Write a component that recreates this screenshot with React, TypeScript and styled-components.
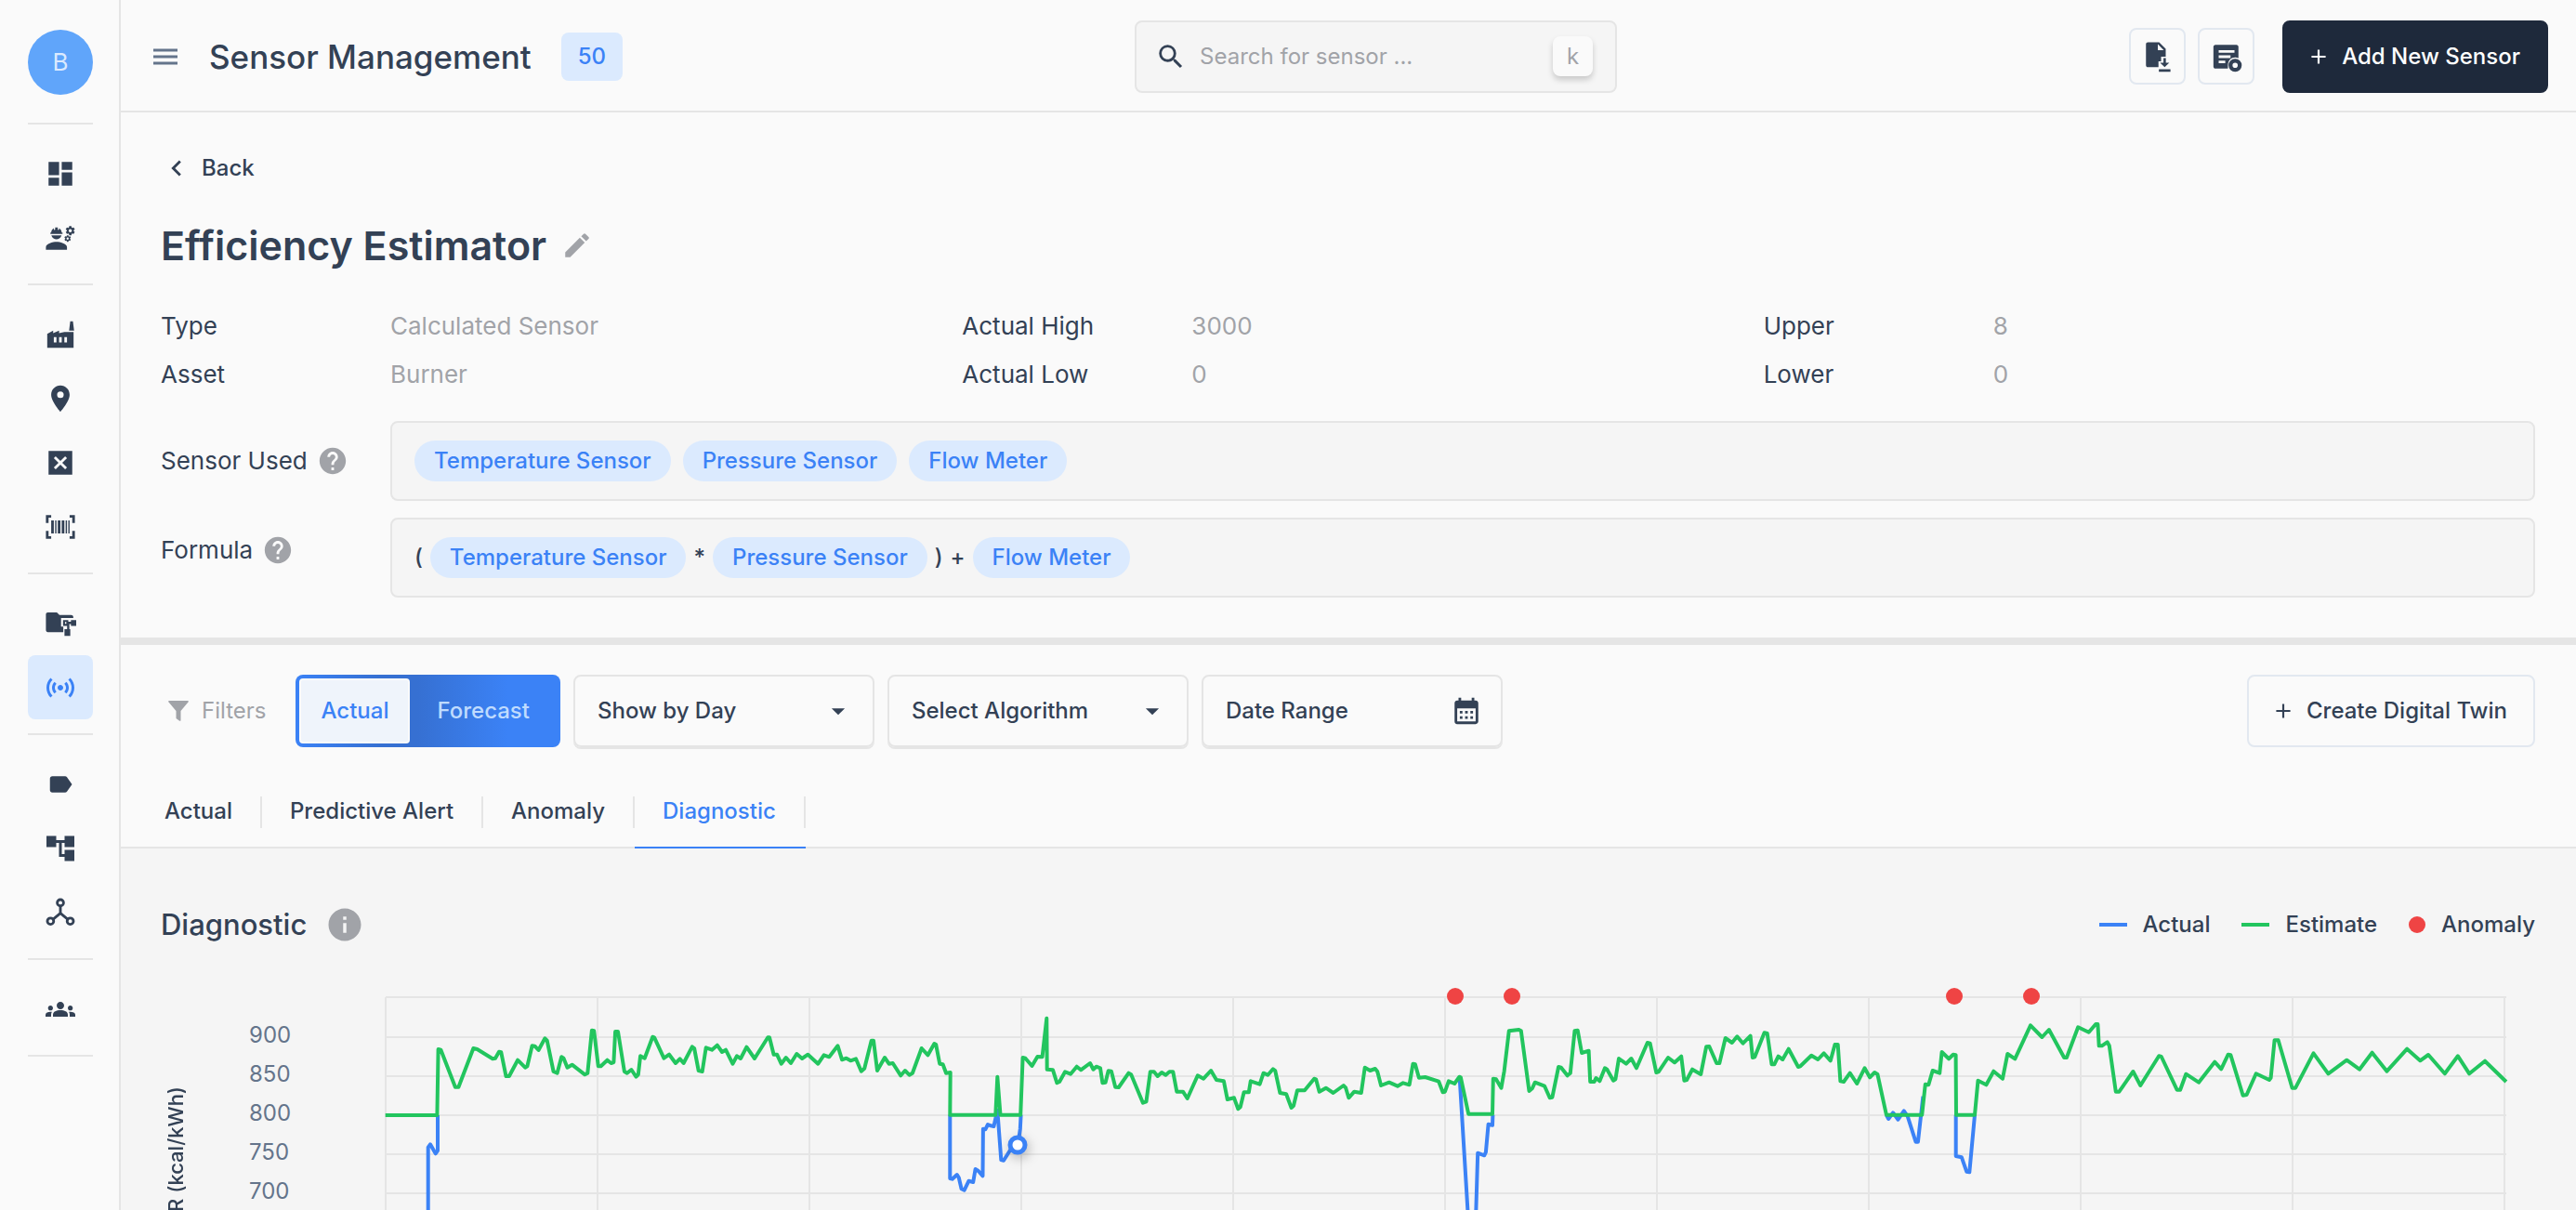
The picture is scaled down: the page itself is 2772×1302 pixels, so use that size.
import React from "react";
import styled, { createGlobalStyle } from "styled-components";
import {
  MdAccountTree,
  MdAdd,
  MdArrowDropDown,
  MdCalendarMonth,
  MdChevronLeft,
  MdDashboard,
  MdDisabledByDefault,
  MdEdit,
  MdEngineering,
  MdGroups,
  MdHelp,
  MdInfo,
  MdLabel,
  MdLocationOn,
  MdSearch,
  MdSensors,
} from "react-icons/md";

const color = {
  page: "#fafafa",
  panel: "#f5f5f5",
  line: "#e5e5e5",
  edge: "#e2e8f0",
  ink: "#334155",
  dark: "#1e293b",
  muted: "#a1a3a8",
  blue: "#3b82f6",
  blueDeep: "#3670d2",
  blueSoft: "#dbeafe",
  green: "#22c55e",
  red: "#ef4444",
};

const GlobalStyle = createGlobalStyle`
  *, *::before, *::after { box-sizing: border-box; }
  body {
    margin: 0;
    background: ${color.page};
    color: ${color.ink};
    font-family: Inter, "Liberation Sans", sans-serif;
    font-size: 24px;
    line-height: 32px;
  }
  button, input, select { font: inherit; color: inherit; margin: 0; }
  button { cursor: pointer; }
  h1, h2, p, dl, dd, ul { margin: 0; padding: 0; }
  svg { display: block; flex: none; }
`;

const Shell = styled.div`
  display: flex;
  height: 100vh;
  overflow: hidden;
`;

/* ---------- sidebar ---------- */

const Sidebar = styled.nav`
  flex: none;
  width: 130px;
  padding: 32px 28px 0 30px;
  border-right: 2px solid ${color.line};
`;

const Avatar = styled.div`
  display: flex;
  align-items: center;
  justify-content: center;
  width: 70px;
  height: 70px;
  margin-bottom: 30px;
  border-radius: 50%;
  background: #60a5fa;
  color: ${color.blueSoft};
  font-size: 26px;
`;

const NavGroup = styled.ul`
  list-style: none;
  padding: 18px 0 15px;
  border-top: 2px solid ${color.line};
  &:last-child {
    border-bottom: 2px solid ${color.line};
  }
`;

const NavLink = styled.a<{ $active?: boolean }>`
  display: flex;
  align-items: center;
  justify-content: center;
  height: 69px;
  border-radius: 8px;
  color: ${(p) => (p.$active ? color.blue : color.ink)};
  background: ${(p) => (p.$active ? color.blueSoft : "transparent")};
`;

/* ---------- top bar ---------- */

const Main = styled.main`
  flex: 1;
  min-width: 0;
`;

const TopBar = styled.header`
  display: flex;
  align-items: center;
  justify-content: space-between;
  height: 121px;
  padding: 2px 30px 0 35px;
  border-bottom: 2px solid ${color.line};
`;

const Cluster = styled.div<{ $gap: number }>`
  display: flex;
  align-items: center;
  gap: ${(p) => p.$gap}px;
`;

const PlainButton = styled.button`
  display: flex;
  align-items: center;
  padding: 0;
  border: 0;
  background: none;
`;

const PageName = styled.p`
  padding-left: 2px;
  font-size: 35px;
  line-height: 44px;
  font-weight: 500;
`;

const Count = styled.span`
  padding: 10px 18px;
  border-radius: 8px;
  background: ${color.blueSoft};
  color: ${color.blue};
  font-weight: 500;
`;

const SearchBox = styled.label`
  display: flex;
  align-items: center;
  width: 519px;
  height: 78px;
  padding: 0 24px 0 20px;
  border: 2px solid ${color.line};
  border-radius: 8px;
  background: ${color.panel};
`;

const SearchInput = styled.input`
  flex: 1;
  min-width: 0;
  padding: 0 14px;
  border: 0;
  outline: 0;
  background: none;
  &::placeholder {
    color: ${color.muted};
    opacity: 1;
  }
`;

const KeyCap = styled.kbd`
  display: flex;
  align-items: center;
  justify-content: center;
  width: 43px;
  height: 43px;
  border-radius: 8px;
  background: ${color.page};
  box-shadow: 0 4px 6px rgba(0, 0, 0, 0.18);
  color: ${color.muted};
  font-family: inherit;
`;

const IconButton = styled.button`
  display: flex;
  align-items: center;
  justify-content: center;
  width: 61px;
  height: 61px;
  padding: 0;
  border: 2px solid ${color.edge};
  border-radius: 8px;
  background: none;
`;

const ActionButton = styled.button<{ $solid?: boolean }>`
  display: flex;
  align-items: center;
  gap: 12px;
  height: 78px;
  padding: 0 28px 0 24px;
  border: 2px solid ${(p) => (p.$solid ? color.dark : color.edge)};
  border-radius: 8px;
  background: ${(p) => (p.$solid ? color.dark : "transparent")};
  color: ${(p) => (p.$solid ? "#ffffff" : color.ink)};
  font-weight: 500;
`;

/* ---------- sensor details ---------- */

const Details = styled.section`
  padding: 43px 44px 43px 43px;
  border-bottom: 8px solid ${color.line};
`;

const BackLink = styled.a`
  display: inline-flex;
  align-items: center;
  gap: 10px;
  color: inherit;
  font-weight: 500;
  text-decoration: none;
`;

const TitleRow = styled.div`
  display: flex;
  align-items: center;
  gap: 16px;
  margin: 32px 0 45px;
`;

const Title = styled.h1`
  font-size: 43px;
  line-height: 52px;
  font-weight: 600;
`;

const Facts = styled.dl`
  display: grid;
  grid-template-columns: repeat(3, 1fr);
  gap: 20px 32px;
  margin-bottom: 34px;
  font-size: 26px;
`;

const Fact = styled.div`
  display: grid;
  grid-template-columns: 247px 1fr;
`;

const FactValue = styled.dd`
  color: ${color.muted};
`;

const FieldRow = styled.div<{ $top?: boolean }>`
  display: grid;
  grid-template-columns: 247px 1fr;
  align-items: ${(p) => (p.$top ? "start" : "center")};
  & + & {
    margin-top: 18px;
  }
`;

const FieldName = styled.div<{ $top?: boolean }>`
  display: flex;
  align-items: center;
  gap: 10px;
  padding-top: ${(p) => (p.$top ? 18 : 0)}px;
  font-size: 26px;
`;

const FieldBox = styled.div<{ $gap: number }>`
  display: flex;
  align-items: center;
  gap: ${(p) => p.$gap}px;
  min-height: 86px;
  padding: 0 24px;
  border: 2px solid ${color.line};
  border-radius: 8px;
  background: ${color.panel};
  font-weight: 500;
`;

const Chip = styled.span`
  padding: 6px 21px;
  border-radius: 22px;
  background: ${color.blueSoft};
  color: ${color.blue};
`;

/* ---------- filters and tabs ---------- */

const FilterBar = styled.div`
  display: flex;
  align-items: center;
  justify-content: space-between;
  padding: 32px 44px 0 51px;
`;

const FilterLabel = styled.span`
  display: flex;
  align-items: center;
  gap: 14px;
  margin-right: 18px;
  color: ${color.muted};
`;

const Toggle = styled.div`
  display: flex;
  height: 78px;
  padding: 4px;
  border-radius: 8px;
  background: linear-gradient(90deg, ${color.blue} 0%, ${color.blueDeep} 32%, ${color.blueDeep} 46%, ${color.blue} 80%);
`;

const ToggleOption = styled.button<{ $on?: boolean }>`
  padding: 0 ${(p) => (p.$on ? 21 : 29)}px;
  border: ${(p) => (p.$on ? `2px solid ${color.page}` : "0")};
  border-radius: 4px;
  background: ${(p) => (p.$on ? "#eff4fb" : "transparent")};
  color: ${(p) => (p.$on ? color.blue : "#bfdbfe")};
  font-weight: 500;
`;

const Picker = styled.div`
  display: grid;
  align-items: center;
  width: 324px;
  height: 78px;
  border: 2px solid ${color.line};
  border-radius: 8px;
  box-shadow: 0 2px 0 ${color.line};
  font-weight: 500;
  & > * {
    grid-area: 1 / 1;
  }
  & > svg {
    justify-self: end;
    margin-right: 20px;
    pointer-events: none;
  }
`;

const PickerSelect = styled.select`
  width: 100%;
  height: 74px;
  padding: 0 24px;
  border: 0;
  appearance: none;
  background: none;
`;

const PickerButton = styled.button`
  width: 100%;
  height: 74px;
  padding: 0 24px;
  border: 0;
  background: none;
  text-align: left;
`;

const Tabs = styled.div`
  display: flex;
  margin-top: 35px;
  padding-left: 17px;
  border-bottom: 2px solid ${color.line};
`;

const Tab = styled.button<{ $on?: boolean }>`
  height: 74px;
  margin-bottom: -2px;
  padding: 0;
  border: 0;
  border-bottom: 2px solid ${(p) => (p.$on ? color.blue : "transparent")};
  background: none;
  color: ${(p) => (p.$on ? color.blue : color.ink)};
  font-weight: 500;
`;

const TabText = styled.span`
  display: block;
  height: 34px;
  margin-bottom: 2px;
  padding: 0 30px;
  border-right: 2px solid ${color.line};
`;

/* ---------- chart ---------- */

const ChartPanel = styled.section`
  padding: 61px 44px 0 43px;
  background: ${color.panel};
`;

const ChartHead = styled.div`
  display: flex;
  align-items: center;
  justify-content: space-between;
  height: 42px;
`;

const ChartTitle = styled.h2`
  font-size: 31px;
  line-height: 40px;
  font-weight: 500;
`;

const LegendItem = styled.span`
  display: flex;
  align-items: center;
  gap: 17px;
  font-weight: 500;
`;

const LegendLine = styled.span<{ $color: string }>`
  width: 30px;
  height: 4px;
  background: ${(p) => p.$color};
`;

const LegendDot = styled.span`
  width: 18px;
  height: 18px;
  border-radius: 50%;
  background: ${color.red};
`;

const ChartBody = styled.div`
  display: flex;
  align-items: flex-start;
  margin-top: 57px;
  padding-right: 31px;
`;

const AxisTitle = styled.span`
  width: 32px;
  margin-top: 96px;
  writing-mode: vertical-rl;
  transform: rotate(180deg);
  font-size: 22px;
  font-weight: 500;
  white-space: nowrap;
`;

const AxisLabels = styled.div`
  width: 210px;
  padding: 20px 0 0 63px;
  color: #64748b;
`;

const AxisLabel = styled.div`
  height: 42px;
  line-height: 42px;
`;

const Plot = styled.svg`
  flex: 1;
  min-width: 0;
  height: 300px;
  overflow: visible;
`;

const Marker = styled.circle`
  fill: #ffffff;
  stroke: ${color.blue};
  stroke-width: 5px;
  filter: drop-shadow(2px 4px 6px rgba(0, 0, 0, 0.25));
`;

/* Hand-drawn icons */

const MenuIcon = () => (
  <svg width="26" height="26" viewBox="0 0 26 26" stroke="#64748b" strokeWidth="3" aria-hidden="true">
    <path d="M0 6h26M0 13h26M0 20h26" />
  </svg>
);

const FactoryIcon = () => (
  <svg width="34" height="34" viewBox="0 0 24 24" fill="currentColor" aria-hidden="true">
    <path d="M18.600 9l.9-7h2l.9 7z" />
    <path fillRule="evenodd" d="M2 22V11.500L6.500 9v2L11 9v2l4-1h7v12zM7 14v4h2v-4zM11 14v4h2v-4zM15 14v4h2v-4z" />
  </svg>
);

const BarcodeIcon = () => (
  <svg width="34" height="34" viewBox="0 0 24 24" fill="currentColor" aria-hidden="true">
    <path d="M1 3h4v2H3v4H1zM19 3h4v6h-2V5h-2zM1 15h2v4h2v2H1zM21 15h2v6h-4v-2h2zM5 7h2v10H5zM8 7h1v10H8zM10 7h2v10h-2zM13 7h2v10h-2zM16 7h1v10h-1zM18 7h1v10h-1z" />
  </svg>
);

const FolderTreeIcon = () => (
  <svg width="34" height="34" viewBox="0 0 24 24" fill="currentColor" aria-hidden="true">
    <path d="M2.500 3.500h6.800l2 2H20c1 0 1.800.6 1.800 1.500v.8H12.500v6.500h1.700v4.200H2.500C1.600 18.500 1 17.900 1 17V5c0-.9.6-1.500 1.500-1.500z" />
    <path fillRule="evenodd" d="M14 9.300h4v1.300h2V9.300h4v4.400h-4v-1.400h-1.200v4h.7v5h-4.400v-5h2v-2.600H14zM15.500 10.800v1.400h1v-1.400z" />
  </svg>
);

const HubIcon = () => (
  <svg width="34" height="34" viewBox="0 0 24 24" fill="none" stroke="currentColor" strokeWidth="2" aria-hidden="true">
    <circle cx="12" cy="4.500" r="2.400" />
    <circle cx="4.500" cy="18.500" r="2.400" />
    <circle cx="19.500" cy="18.500" r="2.400" />
    <path d="M12 7v5.500M12 12.500l-5.500 4.500M12 12.500l5.500 4.500" />
  </svg>
);

const FileDownloadIcon = () => (
  <svg width="34" height="34" viewBox="0 0 24 24" fill="currentColor" aria-hidden="true">
    <path fillRule="evenodd" d="M4.500 1H13l5 5v6h-3.500v3.500h-2V20h-8C3.600 20 3 19.400 3 18.500v-16C3 1.600 3.600 1 4.500 1zM12 2.500V7h4.500z" />
    <path d="M16.300 13h1.800v3.500h2.600L17.200 20l-3.500-3.500h2.600zM12.800 21.500h8.800v1.900h-8.800z" />
  </svg>
);

const ListGearIcon = () => (
  <svg width="34" height="34" viewBox="0 0 24 24" fill="currentColor" aria-hidden="true">
    <path fillRule="evenodd" d="M3.500 3h16c.8 0 1.500.7 1.500 1.500V13c-4-1.600-8 1-8 5.500v2.500H3.500C2.700 21 2 20.300 2 19.500v-15C2 3.700 2.700 3 3.500 3zM6 7v2h12V7zM6 11v2h9v-2zM6 15v2h5v-2z" />
    <path fillRule="evenodd" d="M18.500 13.500a5 5 0 1 1 0 10 5 5 0 0 1 0-10zm0 3a2 2 0 1 0 0 4 2 2 0 0 0 0-4z" />
  </svg>
);

const FunnelIcon = () => (
  <svg width="22" height="22" viewBox="0 0 22 22" fill="currentColor" aria-hidden="true">
    <path d="M1 0h20c1 0 1 1 .5 1.600L13.500 11v10c0 1-1 1-1.600.6L8.500 19v-8L.5 1.600C0 1 0 0 1 0z" />
  </svg>
);

/* ---------- data ---------- */

type IconType = React.ComponentType<{ size?: number }>;
type NavItem = { name: string; icon: IconType; size?: number; active?: boolean };

const nav: NavItem[][] = [
  [
    { name: "Dashboard", icon: MdDashboard },
    { name: "Engineers", icon: MdEngineering },
  ],
  [
    { name: "Plants", icon: FactoryIcon },
    { name: "Locations", icon: MdLocationOn },
    { name: "Exclusions", icon: MdDisabledByDefault },
    { name: "Barcodes", icon: BarcodeIcon },
  ],
  [
    { name: "Asset folders", icon: FolderTreeIcon },
    { name: "Sensors", icon: MdSensors, size: 36, active: true },
  ],
  [
    { name: "Tags", icon: MdLabel, size: 30 },
    { name: "Hierarchy", icon: MdAccountTree, size: 36 },
    { name: "Connections", icon: HubIcon },
  ],
  [{ name: "Teams", icon: MdGroups, size: 32 }],
];

const facts = [
  ["Type", "Calculated Sensor"],
  ["Actual High", "3000"],
  ["Upper", "8"],
  ["Asset", "Burner"],
  ["Actual Low", "0"],
  ["Lower", "0"],
];

type Window = { x: number; y: number; rate: number; samples: string };

const toPoints = (windows: Window[]) =>
  windows
    .flatMap(({ x, y, rate, samples }) =>
      samples.split(" ").map((pair) => {
        const [t, level] = pair.split(",").map(Number);
        return `${(t / rate + x).toFixed(1)},${(level / 3 + y).toFixed(1)}`;
      })
    )
    .join(" ");

const w1 = { x: -285, y: -125, rate: 1.742 };
const w2 = { x: 565, y: -25, rate: 2.529 };
const w3 = { x: 1085, y: -25, rate: 2.529 };
const w4 = { x: 1665, y: -25, rate: 2.266 };

const estimate = toPoints([
  { ...w1, samples: "496,756 593,756 595,543 600,545 627,665 633,665 661,540 668,543 697,574 702,572 709,551 713,553 722,630 728,630 744,578 758,602 762,598 771,532 776,533 783,546 795,508 799,515 811,615 818,620 826,568 830,572 837,602 846,593 870,625 875,620 883,482 887,484 895,598 900,598 912,578 919,588 924,585 927,486 932,486 944,615 949,620 957,609 966,632 970,625 974,565 982,572 997,503 1000,505 1018,572 1028,560 1040,588 1048,574 1055,588 1071,535 1075,540 1083,612 1090,615 1097,538 1108,545 1118,530 1127,552 1134,545 1147,590 1155,565 1162,573 1173,536 1188,573 1213,505 1216,505 1224,560 1230,560 1238,590 1247,570 1256,588 1267,558 1277,573 1288,560 1307,590 1318,562 1328,568 1344,532 1352,577 1360,572 1368,580 1378,574 1388,614 1394,605 1407,515 1411,515 1418,612 1432,570 1440,590 1447,588 1462,628 1470,612 1478,626 1484,620 1501,540 1513,562 1525,525 1528,528 1535,590 1541,592 1547,620 1555,618" },
  { ...w2, samples: "107,455 231,455 236,332 244,455 299,455 305,270 312,272 330,297 345,267 358,268 370,143 371,308 387,310 398,352 405,348 420,316 435,323 452,299 463,310 488,288 497,308 505,299 516,304 522,352 530,350 538,313 546,314 557,365 566,366 593,320 600,325 632,416 641,412 652,316 662,316 672,330 683,318 694,326 704,316 714,316 724,380 741,380 753,402 781,328 797,338 817,312 832,342 852,346 862,405 880,400 891,436 897,430 907,382 920,382 925,346 950,356 960,320 972,326 986,307 992,312 1005,384 1022,388 1036,432 1042,425 1052,376 1072,376 1098,338 1103,340 1112,380 1130,368 1150,384 1178,360 1184,368 1192,400 1207,380 1226,384 1236,302 1250,312 1264,306 1270,315 1280,360 1302,350 1325,362 1340,352 1357,358 1367,290 1373,292 1383,335 1400,333 1437,347 1448,382 1454,380 1464,346 1480,354 1493,332 1497,334 1518,452" },
  { ...w3, samples: "268,452 270,338 278,340 292,368 300,315 313,184 340,180 346,184 368,378 376,370 384,350 410,362 424,400 431,398 448,300 455,302 472,328 480,320 492,184 500,182 511,255 530,248 534,348 545,348 550,336 560,346 574,304 580,308 597,344 603,340 612,273 632,290 646,273 660,304 690,222 697,224 714,318 720,316 746,270 764,286 782,266 790,344 797,342 812,308 835,324 850,235 858,234 878,288 886,288 902,207 920,222 934,202 950,224 970,200 976,270 982,268 1008,190 1016,192 1028,292 1035,292 1046,266 1058,276 1074,242 1100,300 1106,298 1136,263 1154,276 1170,256 1188,280 1200,228 1208,228 1215,346 1224,348 1241,320 1260,354 1281,304 1295,334 1308,318 1316,324 1340,455 1437,455 1446,356 1455,358 1466,312 1485,320 1491,252 1510,274 1522,260 1529,262 1530,455" },
  { ...w4, samples: "102,455 110,344 130,358 148,314 170,338 182,258 200,274 238,166 266,204 283,180 320,270 326,270 354,172 380,188 397,162 402,162 405,232 412,232 425,220 430,232 446,380 454,380 488,315 506,360 551,265 557,267 595,374 603,374 617,323 648,350 687,284 703,307 720,260 726,262 756,392 765,390 788,322 820,342 824,335 833,214 842,214 876,368 884,368 928,256 964,322 1009,278 1040,308 1071,254 1107,314 1156,242 1188,280 1208,261 1248,322 1280,265 1308,322 1346,281 1398,348" },
]);

const actual = [
  [{ ...w1, samples: "576,1200 576,860 580,850 590,880 594,870 594,756" }],
  [{ ...w2, samples: "107,455 107,660 113,662 126,648 131,658 138,694 146,698 158,668 170,672 176,630 184,636 196,652 197,500 203,502 210,486 218,490 226,492 236,440 246,600 253,602 270,570 292,552 298,500 300,455" }],
  [{ ...w3, samples: "179,340 212,980 218,980 228,578 246,586 250,575 257,485 268,488 269,455" }],
  [{ ...w3, samples: "1340,455 1346,468 1358,448 1372,470 1388,442 1398,460 1420,542 1426,542 1440,395" }],
  [{ ...w4, samples: "56,455 56,588 70,592 82,638 89,640 102,455" }],
].map(toPoints);

const columns = Array.from({ length: 11 }, (_, i) => i * 228);
const rows = [0, 43, 85, 127, 169, 211, 253];
const anomalies = [1151, 1212, 1688, 1771];

/* ---------- page ---------- */

export default function App() {
  return (
    <>
      <GlobalStyle />
      <Shell>
        <Sidebar aria-label="Main">
          <Avatar>B</Avatar>
          {nav.map((group) => (
            <NavGroup key={group[0].name}>
              {group.map(({ name, icon: Icon, size = 34, active }) => (
                <li key={name}>
                  <NavLink href="#" aria-label={name} $active={active}>
                    <Icon size={size} />
                  </NavLink>
                </li>
              ))}
            </NavGroup>
          ))}
        </Sidebar>

        <Main>
          <TopBar>
            <Cluster $gap={32}>
              <PlainButton aria-label="Menu">
                <MenuIcon />
              </PlainButton>
              <PageName>Sensor Management</PageName>
              <Count>50</Count>
            </Cluster>
            <SearchBox>
              <MdSearch size={34} aria-hidden="true" />
              <SearchInput type="text" placeholder="Search for sensor ..." aria-label="Search for sensor" />
              <KeyCap>k</KeyCap>
            </SearchBox>
            <Cluster $gap={30}>
              <Cluster $gap={13}>
                <IconButton aria-label="Download">
                  <FileDownloadIcon />
                </IconButton>
                <IconButton aria-label="List settings">
                  <ListGearIcon />
                </IconButton>
              </Cluster>
              <ActionButton $solid>
                <MdAdd size={26} aria-hidden="true" />
                Add New Sensor
              </ActionButton>
            </Cluster>
          </TopBar>

          <Details>
            <BackLink href="#">
              <MdChevronLeft size={34} aria-hidden="true" />
              Back
            </BackLink>
            <TitleRow>
              <Title>Efficiency Estimator</Title>
              <PlainButton aria-label="Edit name">
                <MdEdit size={34} color={color.muted} />
              </PlainButton>
            </TitleRow>
            <Facts>
              {facts.map(([name, value]) => (
                <Fact key={name}>
                  <dt>{name}</dt>
                  <FactValue>{value}</FactValue>
                </Fact>
              ))}
            </Facts>
            <FieldRow>
              <FieldName>
                Sensor Used
                <MdHelp size={34} color={color.muted} aria-hidden="true" />
              </FieldName>
              <FieldBox $gap={13}>
                <Chip>Temperature Sensor</Chip>
                <Chip>Pressure Sensor</Chip>
                <Chip>Flow Meter</Chip>
              </FieldBox>
            </FieldRow>
            <FieldRow $top>
              <FieldName $top>
                Formula
                <MdHelp size={34} color={color.muted} aria-hidden="true" />
              </FieldName>
              <FieldBox $gap={8}>
                <span>(</span>
                <Chip>Temperature Sensor</Chip>
                <span>*</span>
                <Chip>Pressure Sensor</Chip>
                <span>)</span>
                <span>+</span>
                <Chip>Flow Meter</Chip>
              </FieldBox>
            </FieldRow>
          </Details>

          <FilterBar>
            <Cluster $gap={14}>
              <FilterLabel>
                <FunnelIcon />
                Filters
              </FilterLabel>
              <Toggle>
                <ToggleOption $on aria-pressed="true">Actual</ToggleOption>
                <ToggleOption aria-pressed="false">Forecast</ToggleOption>
              </Toggle>
              <Picker>
                <PickerSelect aria-label="Period">
                  <option>Show by Day</option>
                </PickerSelect>
                <MdArrowDropDown size={34} aria-hidden="true" />
              </Picker>
              <Picker>
                <PickerSelect aria-label="Algorithm">
                  <option>Select Algorithm</option>
                </PickerSelect>
                <MdArrowDropDown size={34} aria-hidden="true" />
              </Picker>
              <Picker>
                <PickerButton>Date Range</PickerButton>
                <MdCalendarMonth size={34} aria-hidden="true" />
              </Picker>
            </Cluster>
            <ActionButton>
              <MdAdd size={26} aria-hidden="true" />
              Create Digital Twin
            </ActionButton>
          </FilterBar>

          <Tabs role="tablist">
            <Tab role="tab"><TabText>Actual</TabText></Tab>
            <Tab role="tab"><TabText>Predictive Alert</TabText></Tab>
            <Tab role="tab"><TabText>Anomaly</TabText></Tab>
            <Tab role="tab" aria-selected="true" $on><TabText>Diagnostic</TabText></Tab>
          </Tabs>

          <ChartPanel>
            <ChartHead>
              <Cluster $gap={20}>
                <ChartTitle>Diagnostic</ChartTitle>
                <MdInfo size={42} color={color.muted} aria-hidden="true" />
              </Cluster>
              <Cluster $gap={34}>
                <LegendItem><LegendLine $color={color.blue} />Actual</LegendItem>
                <LegendItem><LegendLine $color={color.green} />Estimate</LegendItem>
                <LegendItem><LegendDot />Anomaly</LegendItem>
              </Cluster>
            </ChartHead>
            <ChartBody>
              <AxisTitle>R (kcal/kWh)</AxisTitle>
              <AxisLabels>
                {[900, 850, 800, 750, 700].map((v) => (
                  <AxisLabel key={v}>{v}</AxisLabel>
                ))}
              </AxisLabels>
              <Plot viewBox="0 0 2282 300" preserveAspectRatio="none" role="img" aria-label="Actual and estimated values">
                <g stroke={color.line} strokeWidth="2">
                  {columns.map((x) => (
                    <path key={x} d={`M${x} 0V300`} />
                  ))}
                  {rows.map((y) => (
                    <path key={y} d={`M0 ${y}H2282`} />
                  ))}
                </g>
                <g fill="none" strokeWidth="4" strokeLinejoin="round">
                  {actual.map((points) => (
                    <polyline key={points} points={points} stroke={color.blue} />
                  ))}
                  <polyline points={estimate} stroke={color.green} />
                </g>
                <g fill={color.red}>
                  {anomalies.map((x) => (
                    <circle key={x} cx={x} cy="-1" r="9" />
                  ))}
                </g>
                <Marker cx="680" cy="159" r="8" />
              </Plot>
            </ChartBody>
          </ChartPanel>
        </Main>
      </Shell>
    </>
  );
}
